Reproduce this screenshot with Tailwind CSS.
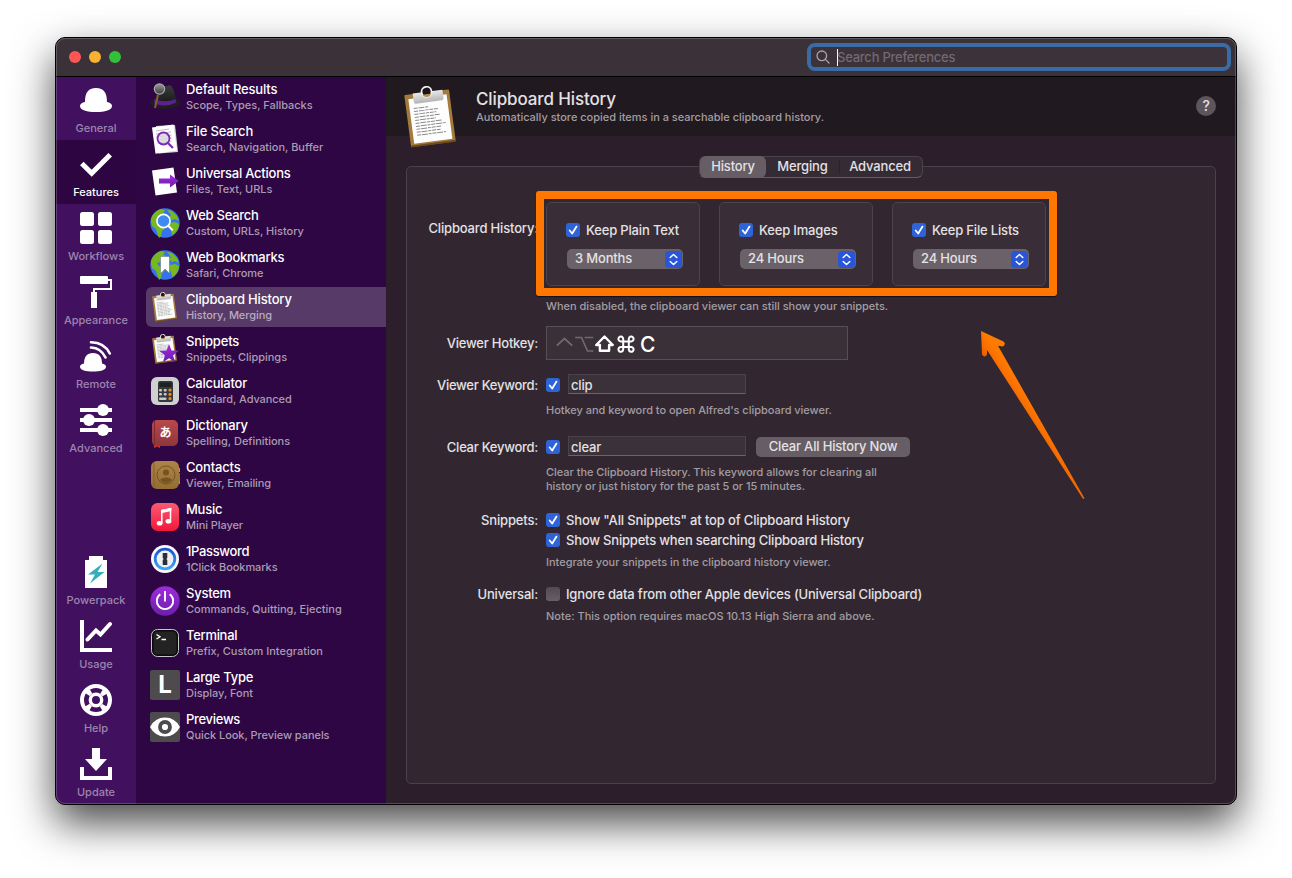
<!DOCTYPE html>
<html lang="en">
<head>
<meta charset="utf-8">
<title>Alfred Preferences</title>
<script src="https://cdn.jsdelivr.net/npm/@tailwindcss/browser@4"></script>
</head>
<body class="relative w-[1292px] h-[878px] overflow-hidden bg-white pt-[37px] pl-[55px] font-['Inter','Liberation_Sans',sans-serif] text-[13px] leading-4 font-[450] tracking-[-0.17px] text-[#e4e1e4]">

<!-- Shared drawings -->
<svg class="absolute left-0 top-0 size-0">
  <defs>
    <linearGradient id="violet" x1="0" y1="0" x2="0" y2="1"><stop offset="0" stop-color="#a02ae0"/><stop offset="1" stop-color="#6b1fa8"/></linearGradient>
    <linearGradient id="silver" x1="0" y1="0" x2="0" y2="1"><stop offset="0" stop-color="#e9e9e9"/><stop offset="1" stop-color="#b4b4b6"/></linearGradient>
    <linearGradient id="hat" x1="0" y1="0" x2="0" y2="1"><stop offset="0" stop-color="#3d3d3d"/><stop offset="1" stop-color="#151515"/></linearGradient>
    <linearGradient id="lens" x1="0" y1="0" x2="0" y2="1"><stop offset="0" stop-color="#9a9a9a"/><stop offset="1" stop-color="#3c3c3c"/></linearGradient>
    <linearGradient id="red" x1="0" y1="0" x2="0" y2="1"><stop offset="0" stop-color="#fb5b72"/><stop offset="1" stop-color="#f3173a"/></linearGradient>
    <linearGradient id="book" x1="0" y1="0" x2="0" y2="1"><stop offset="0" stop-color="#b9484c"/><stop offset="1" stop-color="#8f363c"/></linearGradient>
    <linearGradient id="tan" x1="0" y1="0" x2="0" y2="1"><stop offset="0" stop-color="#ad8446"/><stop offset="1" stop-color="#946d35"/></linearGradient>
    <linearGradient id="onep" x1="0" y1="0" x2="0" y2="1"><stop offset="0" stop-color="#1b56d0"/><stop offset="1" stop-color="#3aa5f8"/></linearGradient>
    <linearGradient id="arrow" gradientUnits="userSpaceOnUse" x1="1026" y1="420" x2="1038" y2="412"><stop offset="0" stop-color="#e85f00"/><stop offset=".5" stop-color="#f96e00"/><stop offset="1" stop-color="#ff7a00"/></linearGradient>
    <symbol id="clipboard" viewBox="0 0 52 62">
      <g transform="rotate(-7.5 26 32)">
        <rect x="3.5" y="6" width="45" height="52.5" rx="1" fill="#a47a3c"/>
        <rect x="3.5" y="57" width="45" height="1.8" fill="#6b4a1c"/>
        <rect x="7" y="10.500" width="38.500" height="45" fill="#fdfdfd"/>
        <path d="M12 5.500h30v8.500q0 2-2 2h-26q-2 0-2-2z" fill="url(#silver)"/>
        <circle cx="26" cy="5.500" r="5" fill="#1c1419" stroke="#f1f1f1" stroke-width="1.800"/>
        <path d="M21.500 8h9a5 5 0 0 1-9 0z" fill="#b58a4a"/>
        <path d="M11 20.500h15M11 23.500h24M11 26.500h22M11 29.500h25M11 32.500h21M11 35.500h27M11 38.500h30M11 41.500h25M11 44.500h24M11 47.500h29" stroke="#8a8a8a" stroke-width="1" stroke-dasharray="4 .8 6 .8 3 .8"/>
      </g>
    </symbol>
    <symbol id="globe" viewBox="0 0 30 30">
      <circle cx="15" cy="15" r="14.700" fill="#3574ee"/>
      <path d="M1 11C3 5 7 2 11 1l4 1-2 3 3 1-4 3-1 3-4 1 2 3 4 1 2 3-3 3-1 5-2 2q-2-5-3-9l-4-3-1-4zM17 2l5 1 5 5 2 5-4-2-3 1-3-3 2-2zM20 15l5-1 4 2q0 5-4 9l-3 2-1-5-2-3z" fill="#76b81d"/>
    </symbol>
    <symbol id="tick" viewBox="0 0 14 14">
      <rect width="14" height="14" rx="3" fill="#2e64d8"/>
      <path d="M3.700 7.500l2.500 3L10.500 3.600" fill="none" stroke="#fff" stroke-width="1.800" stroke-linecap="round" stroke-linejoin="round"/>
    </symbol>
    <symbol id="updown" viewBox="0 0 17 17">
      <rect width="17" height="17" rx="4" fill="#2955d6"/>
      <path d="M5.200 6.500l3.300-3 3.300 3M5.200 10.500l3.300 3 3.300-3" fill="none" stroke="#fff" stroke-width="1.500" stroke-linecap="round" stroke-linejoin="round"/>
    </symbol>
  </defs>
</svg>

<div class="relative w-[1182px] h-[768px] rounded-[10px] border border-black bg-[#2c1f2b] shadow-[0_18px_42px_rgba(0,0,0,0.72)]">
<div class="w-full h-full rounded-[9px] overflow-hidden flex flex-col">

  <!-- Title bar -->
  <header class="h-[39px] shrink-0 bg-[#3a3139] border-b border-b-black flex items-center justify-between pl-[13px] pr-[5px]">
    <div class="flex gap-2">
      <span class="size-3 rounded-full bg-[#fc5753]"></span>
      <span class="size-3 rounded-full bg-[#f7b32f]"></span>
      <span class="size-3 rounded-full bg-[#34c13a]"></span>
    </div>
    <div class="w-[424px] h-7 rounded-[8px] border-4 border-[#3a6ba5] bg-[#3b323a] flex items-center pl-[5px] tracking-[-0.24px] text-[#716a71]">
      <svg class="size-[14px] mr-[7px]" viewBox="0 0 14 14" fill="none" stroke="#a9a4a8" stroke-width="1.300" stroke-linecap="round"><circle cx="5.800" cy="5.800" r="4.800"/><path d="M9.400 9.400L13 13"/></svg>
      <span class="w-px h-[17px] bg-white"></span>
      <span class="-ml-px">Search Preferences</span>
    </div>
  </header>

  <div class="flex flex-1 min-h-0">

    <!-- Section bar -->
    <nav class="w-20 shrink-0 bg-[#41115f] flex flex-col text-[11px] leading-4 tracking-[0px] text-[#9d85ad]">
      <div class="h-[63px] pt-[7px] flex flex-col items-center gap-1">
        <svg class="size-8" viewBox="0 0 32 32" fill="#fff"><path d="M5 18C5 9 8 4 16 4s11 5 11 14c3 .5 5 2 5 4 0 4-7 6-16 6S0 26 0 22c0-2 2-3.500 5-4z"/></svg>
        <span>General</span>
      </div>
      <div class="h-16 pt-2 flex flex-col items-center gap-1 bg-[#2d0641] text-white font-medium">
        <svg class="size-8" viewBox="0 0 32 32" fill="none" stroke="#fff" stroke-width="5"><path d="M1.800 15.500L11.700 25.200 30.200 6.800"/></svg>
        <span>Features</span>
      </div>
      <div class="h-16 pt-2 flex flex-col items-center gap-1">
        <svg class="size-8" viewBox="0 0 32 32" fill="#fff"><rect width="14" height="14" rx="2.500"/><rect x="18" width="14" height="14" rx="2.500"/><rect y="18" width="14" height="14" rx="2.500"/><rect x="18" y="18" width="14" height="14" rx="2.500"/></svg>
        <span>Workflows</span>
      </div>
      <div class="h-16 pt-2 flex flex-col items-center gap-1">
        <svg class="size-8" viewBox="0 0 32 32"><rect width="28" height="8" rx="1" fill="#fff"/><rect x="11" y="16" width="6" height="16" fill="#fff"/><path d="M28 4h3v9H14v4" fill="none" stroke="#fff" stroke-width="2"/></svg>
        <span>Appearance</span>
      </div>
      <div class="h-16 pt-2 flex flex-col items-center gap-1">
        <svg class="size-8" viewBox="0 0 32 32" fill="#fff"><path d="M4 23.500C4 17 7 13 13 13s9 4 9 10.500c2.500.5 4 1.500 4 3.200C26 30 20 31.500 13 31.500S0 30 0 26.700c0-1.700 1.500-2.700 4-3.200z"/><path d="M11 7.500Q21 8 25.500 17.500M11 2.200Q24.500 2.500 29.800 13.500" fill="none" stroke="#fff" stroke-width="2.600" stroke-linecap="round"/></svg>
        <span>Remote</span>
      </div>
      <div class="h-16 pt-2 flex flex-col items-center gap-1">
        <svg class="size-8" viewBox="0 0 32 32" fill="#fff"><path d="M0 4h32v4H0zM0 14h32v4H0zM0 24h32v4H0z"/><circle cx="23" cy="6" r="6"/><circle cx="9" cy="16" r="6"/><circle cx="23" cy="26" r="6"/></svg>
        <span>Advanced</span>
      </div>
      <div class="flex-1"></div>
      <div class="h-16 pt-2 flex flex-col items-center gap-1">
        <svg class="size-8" viewBox="0 0 32 32"><path d="M5 4h4V0h14v4h4v28H5z" fill="#fff"/><path d="M22.500 7.500L8 18.500h7L10 27.500 24.500 16h-7z" fill="#34aebb"/></svg>
        <span>Powerpack</span>
      </div>
      <div class="h-16 pt-2 flex flex-col items-center gap-1">
        <svg class="size-8" viewBox="0 0 32 32" fill="none" stroke="#fff" stroke-width="4"><path d="M2 0v30h30"/><path d="M7.500 19.500l8.500-9 4.500 4L30 4" stroke-linecap="round"/></svg>
        <span>Usage</span>
      </div>
      <div class="h-16 pt-2 flex flex-col items-center gap-1">
        <svg class="size-8" viewBox="0 0 32 32" fill="none" stroke="#fff"><circle cx="16" cy="16" r="14" stroke-width="4"/><circle cx="16" cy="16" r="5.700" stroke-width="3.400"/><circle cx="16" cy="16" r="10" stroke-width="5" stroke-dasharray="4.600 11.108" stroke-dashoffset="-5.554"/></svg>
        <span>Help</span>
      </div>
      <div class="h-16 pt-2 flex flex-col items-center gap-1">
        <svg class="size-8" viewBox="0 0 32 32" fill="#fff"><path d="M12 0h8v11h7L16 23 5 11h7z"/><path d="M0 19h4v9h24v-9h4v13H0z"/></svg>
        <span>Update</span>
      </div>
    </nav>

    <!-- Feature list -->
    <aside class="w-[250px] shrink-0 bg-[#2d0643] pl-[10px] flex flex-col gap-[2px]">
      <div class="h-10 pl-1 flex items-center gap-[6px]">
        <svg class="size-[30px]" viewBox="0 0 30 30"><ellipse cx="15" cy="21" rx="15" ry="6" fill="#201d20"/><path d="M5 21C6 9 9 5 12 4q4 1 8-1 5 3 6 17-10 6-21 1z" fill="url(#hat)"/><path d="M4.500 17q11 4.500 21 0l.8 3.500q-11 5.500-22 1z" fill="#5c2191"/><path d="M8 13L5 26" stroke="#8c5b35" stroke-width="2"/><circle cx="9.500" cy="7" r="5.200" fill="url(#lens)" stroke="#a8a8a8" stroke-width="1.200"/></svg>
        <div><div class="font-medium text-white">Default Results</div><div class="text-[11px] tracking-[-0.03px] text-[#ab9bb3]">Scope, Types, Fallbacks</div></div>
      </div>
      <div class="h-10 pl-1 flex items-center gap-[6px]">
        <svg class="size-[30px]" viewBox="0 0 30 30"><path d="M6 2l19-1 3 27-19 1.500z" fill="#d6d6d6"/><path d="M2 3.500L23.500.5l3.500 26L5.500 29.800z" fill="#fff"/><path d="M6 7l13-2M6 10l15-2M6.500 13l15-2M7 16l15-2M7.500 19l14-2" stroke="#b7b7b7" stroke-width=".9"/><circle cx="13.500" cy="14.500" r="6" fill="#d9d4de" fill-opacity=".8" stroke="#7d2ab5" stroke-width="1.800"/><path d="M18 19l5 5" stroke="#7d2ab5" stroke-width="2.200"/></svg>
        <div><div class="font-medium text-white">File Search</div><div class="text-[11px] tracking-[-0.02px] text-[#ab9bb3]">Search, Navigation, Buffer</div></div>
      </div>
      <div class="h-10 pl-1 flex items-center gap-[6px]">
        <svg class="size-[30px]" viewBox="0 0 30 30"><path d="M2 4.500L23.500 1.500l3.500 25L5.500 29.500z" fill="#fff"/><path d="M9 12.500h11V8.500L28.800 15 20 21.500v-4H9z" fill="url(#violet)"/></svg>
        <div><div class="font-medium tracking-[-0.25px] text-white">Universal Actions</div><div class="text-[11px] tracking-[-0.02px] text-[#ab9bb3]">Files, Text, URLs</div></div>
      </div>
      <div class="h-10 pl-1 flex items-center gap-[6px]">
        <svg class="size-[30px]" viewBox="0 0 30 30"><use href="#globe"/><circle cx="13.500" cy="13" r="6.600" fill="#3f8bf3" stroke="#fff" stroke-width="1.600"/><path d="M18.200 17.800l4.600 4.600" stroke="#fff" stroke-width="2"/></svg>
        <div><div class="font-medium tracking-[-0.25px] text-white">Web Search</div><div class="text-[11px] tracking-[-0.02px] text-[#ab9bb3]">Custom, URLs, History</div></div>
      </div>
      <div class="h-10 pl-1 flex items-center gap-[6px]">
        <svg class="size-[30px]" viewBox="0 0 30 30"><use href="#globe"/><path d="M10.500 6.500h9v17L15 19l-4.500 4.500z" fill="#fff" stroke="#5b6b80" stroke-width=".5"/></svg>
        <div><div class="font-medium tracking-[-0.25px] text-white">Web Bookmarks</div><div class="text-[11px] tracking-[-0.08px] text-[#ab9bb3]">Safari, Chrome</div></div>
      </div>
      <div class="h-10 pl-1 flex items-center gap-[6px] rounded-l-[6px] bg-[#583a68]">
        <svg class="size-[30px]" viewBox="0 0 30 30"><use href="#clipboard" x="1" width="27" height="30"/></svg>
        <div><div class="font-medium text-white">Clipboard History</div><div class="text-[11px] tracking-[-0.08px] text-[#b9abc0]">History, Merging</div></div>
      </div>
      <div class="h-10 pl-1 flex items-center gap-[6px]">
        <svg class="size-[30px]" viewBox="0 0 30 30"><use href="#clipboard" x="1" width="27" height="30"/><path d="M19 10l2.500 6.500 7.300.3-5.700 4.500 2 7L19 24.300l-6.100 4 2-7-5.700-4.500 7.300-.3z" fill="url(#violet)"/></svg>
        <div><div class="font-medium text-white">Snippets</div><div class="text-[11px] tracking-[-0.03px] text-[#ab9bb3]">Snippets, Clippings</div></div>
      </div>
      <div class="h-10 pl-1 flex items-center gap-[6px]">
        <svg class="size-[30px]" viewBox="0 0 30 30"><rect x="1" y="1" width="28" height="28" rx="6" fill="#cfd0d2"/><rect x="8" y="5" width="15" height="21" rx="2" fill="#37383b"/><rect x="9.500" y="6.500" width="12" height="4.500" fill="#1f2022"/><g fill="#c9c9c9"><rect x="9" y="13" width="3" height="2.400" rx="1"/><rect x="13.700" y="13" width="3" height="2.400" rx="1"/><rect x="9" y="17" width="3" height="2.400" rx="1"/><rect x="13.700" y="17" width="3" height="2.400" rx="1"/><rect x="9" y="21.500" width="7.500" height="2.600" rx="1"/></g><g fill="#f28b1d"><rect x="18.500" y="12.700" width="3" height="2.800" rx="1"/><rect x="18.500" y="16.900" width="3" height="2.800" rx="1"/><rect x="18.500" y="21.300" width="3" height="2.800" rx="1"/></g></svg>
        <div><div class="font-medium tracking-[-0.24px] text-white">Calculator</div><div class="text-[11px] tracking-[-0.08px] text-[#ab9bb3]">Standard, Advanced</div></div>
      </div>
      <div class="h-10 pl-1 flex items-center gap-[6px]">
        <svg class="size-[30px]" viewBox="0 0 30 30"><path d="M4 26h6v4l-3-1.500L4 30z" fill="#d8302f"/><rect x="2" y="2" width="26" height="26" rx="5" fill="url(#book)"/><path d="M4.500 3v24" stroke="#7d2c33" stroke-width="1"/><text x="15.500" y="18.500" text-anchor="middle" font-family="Noto Sans CJK JP, sans-serif" font-weight="700" font-size="12" fill="#fff">あ</text></svg>
        <div><div class="font-medium text-white">Dictionary</div><div class="text-[11px] tracking-[-0.03px] text-[#ab9bb3]">Spelling, Definitions</div></div>
      </div>
      <div class="h-10 pl-1 flex items-center gap-[6px]">
        <svg class="size-[30px]" viewBox="0 0 30 30"><path d="M28 8h2v4h-2z" fill="#8a9aa8"/><path d="M28 13h2v4h-2z" fill="#3b82c4"/><path d="M28 17h2v4h-2z" fill="#4ca34c"/><path d="M28 21h2v3h-2z" fill="#d9822b"/><rect x="1" y="1" width="28" height="28" rx="6" fill="url(#tan)"/><path d="M4 2.500v25" stroke="#7e5b28" stroke-width=".8"/><circle cx="16" cy="15" r="9" fill="none" stroke="#6e4f20" stroke-width=".9"/><g fill="#73531f"><circle cx="16" cy="12.500" r="3"/><path d="M10 20q1.500-2.500 6-2.500t6 2.500q-2.500 3-6 3t-6-3z"/></g></svg>
        <div><div class="font-medium text-white">Contacts</div><div class="text-[11px] tracking-[-0.08px] text-[#ab9bb3]">Viewer, Emailing</div></div>
      </div>
      <div class="h-10 pl-1 flex items-center gap-[6px]">
        <svg class="size-[30px]" viewBox="0 0 30 30"><rect x="1" y="1" width="28" height="28" rx="6.500" fill="url(#red)"/><path d="M11.800 21V8.600L20.500 6.800V18.500" fill="none" stroke="#fff" stroke-width="1.500"/><path d="M11 8l10.300-2.200V9L11 11.200z" fill="#fff"/><ellipse cx="9.600" cy="21.300" rx="2.900" ry="2.300" fill="#fff"/><ellipse cx="18.500" cy="19.200" rx="2.900" ry="2.300" fill="#fff"/></svg>
        <div><div class="font-medium tracking-[-0.24px] text-white">Music</div><div class="text-[11px] tracking-[-0.08px] text-[#ab9bb3]">Mini Player</div></div>
      </div>
      <div class="h-10 pl-1 flex items-center gap-[6px]">
        <svg class="size-[30px]" viewBox="0 0 30 30"><circle cx="15" cy="15" r="14" fill="#fafafa"/><circle cx="15" cy="15" r="9.800" fill="#eef0f2" stroke="url(#onep)" stroke-width="2.800"/><path d="M12.700 9h4.600v5l-1 1 1 1v5h-4.600v-5l1-1-1-1z" fill="#2b2f36"/></svg>
        <div><div class="font-medium tracking-[-0.35px] text-white">1Password</div><div class="text-[11px] tracking-[-0.08px] text-[#ab9bb3]">1Click Bookmarks</div></div>
      </div>
      <div class="h-10 pl-1 flex items-center gap-[6px]">
        <svg class="size-[30px]" viewBox="0 0 30 30"><circle cx="15" cy="15" r="14.700" fill="url(#violet)"/><path d="M10.300 8.200a8.200 8.200 0 1 0 9.400 0M15 5v10.500" fill="none" stroke="#fff" stroke-width="1.900"/></svg>
        <div><div class="font-medium tracking-[-0.24px] text-white">System</div><div class="text-[11px] tracking-[0.01px] text-[#ab9bb3]">Commands, Quitting, Ejecting</div></div>
      </div>
      <div class="h-10 pl-1 flex items-center gap-[6px]">
        <svg class="size-[30px]" viewBox="0 0 30 30"><rect x="1.500" y="1.500" width="27" height="27" rx="6" fill="#0b0b0b" stroke="#c3c6cb" stroke-width="1"/><rect x="3.500" y="3.500" width="23" height="23" rx="4" fill="#232323"/><path d="M6.500 6.500L10 8.800 6.500 11M11.500 11.500h4.500" fill="none" stroke="#fff" stroke-width="1.300"/></svg>
        <div><div class="font-medium tracking-[-0.3px] text-white">Terminal</div><div class="text-[11px] tracking-[-0.01px] text-[#ab9bb3]">Prefix, Custom Integration</div></div>
      </div>
      <div class="h-10 pl-1 flex items-center gap-[6px]">
        <div class="size-[30px] rounded-[2px] bg-[#4d4b4e] flex items-center justify-center text-[24px] leading-none font-bold text-white">L</div>
        <div><div class="font-medium tracking-[-0.24px] text-white">Large Type</div><div class="text-[11px] tracking-[-0.03px] text-[#ab9bb3]">Display, Font</div></div>
      </div>
      <div class="h-10 pl-1 flex items-center gap-[6px]">
        <svg class="size-[30px]" viewBox="0 0 30 30"><rect width="30" height="30" rx="2" fill="#4d4b4e"/><path d="M0 15Q5 5.500 15 5.500T30 15Q25 24.500 15 24.500T0 15z" fill="#fff"/><circle cx="15" cy="15" r="5" fill="none" stroke="#4d4b4e" stroke-width="3.800"/></svg>
        <div><div class="font-medium tracking-[-0.3px] text-white">Previews</div><div class="text-[11px] tracking-[-0.05px] text-[#ab9bb3]">Quick Look, Preview panels</div></div>
      </div>
    </aside>

    <!-- Feature pane -->
    <main class="flex-1 min-w-0 flex flex-col">
      <div class="h-[59px] shrink-0 bg-[#211920] flex pl-[18px] pr-[20px]">
        <svg class="w-[52px] h-[62px] mt-[9px] shrink-0 overflow-visible"><use href="#clipboard" width="52" height="62"/></svg>
        <div class="ml-5 mt-[11px] flex-1">
          <div class="text-[17px] leading-[22px] tracking-[-0.12px]">Clipboard History</div>
          <div class="text-[11px] leading-[14px] tracking-[-0.01px] text-[#a39ea2]">Automatically store copied items in a searchable clipboard history.</div>
        </div>
        <div class="size-5 mt-[19px] rounded-full bg-[#5c555b] flex items-center justify-center text-[14px] font-medium">?</div>
      </div>

      <section class="relative mt-[30px] ml-5 w-[810px] h-[618px] rounded-[5px] border border-[#4b414a] bg-[#322731]">
        <div class="absolute left-[292px] -top-[11px] w-[224px] h-[22px] rounded-[6px] border border-[#4b424a] border-b-[#655c64] bg-[#352b34] flex items-stretch">
          <div class="w-[66px] -my-px rounded-[6px] bg-[#665d65] flex items-center justify-center pb-[2px]">History</div>
          <div class="w-[73px] flex items-center justify-center pb-[2px]">Merging</div>
          <div class="w-px my-[3px] bg-[#2b212a]"></div>
          <div class="flex-1 flex items-center justify-center pr-[2px] pb-[2px]">Advanced</div>
        </div>

        <div class="mt-[35px] flex gap-2">
          <div class="w-[131px] pt-[18px] text-right">Clipboard History:</div>
          <div class="relative flex gap-[19px]">
            <div class="w-[154px] h-[84px] rounded-[5px] border border-[#4b424a] bg-[#392e37] pt-5 pl-[19px]">
              <div class="flex items-center gap-[6px] h-[14px]"><svg class="size-[14px]"><use href="#tick"/></svg><span>Keep Plain Text</span></div>
              <div class="mt-3 ml-px w-[116px] h-5 rounded-[5px] bg-[#6a6169] flex items-center justify-between pl-2 pr-[1.5px]"><span class="-mt-[2px]">3 Months</span><svg class="size-[17px]"><use href="#updown"/></svg></div>
            </div>
            <div class="w-[154px] h-[84px] rounded-[5px] border border-[#4b424a] bg-[#392e37] pt-5 pl-[19px]">
              <div class="flex items-center gap-[6px] h-[14px]"><svg class="size-[14px]"><use href="#tick"/></svg><span>Keep Images</span></div>
              <div class="mt-3 ml-px w-[116px] h-5 rounded-[5px] bg-[#6a6169] flex items-center justify-between pl-2 pr-[1.5px]"><span class="-mt-[2px]">24 Hours</span><svg class="size-[17px]"><use href="#updown"/></svg></div>
            </div>
            <div class="w-[154px] h-[84px] rounded-[5px] border border-[#4b424a] bg-[#392e37] pt-5 pl-[19px]">
              <div class="flex items-center gap-[6px] h-[14px]"><svg class="size-[14px]"><use href="#tick"/></svg><span>Keep File Lists</span></div>
              <div class="mt-3 ml-px w-[116px] h-5 rounded-[5px] bg-[#6a6169] flex items-center justify-between pl-2 pr-[1.5px]"><span class="-mt-[2px]">24 Hours</span><svg class="size-[17px]"><use href="#updown"/></svg></div>
            </div>
            <div class="absolute -left-[10px] -top-[11px] w-[521px] h-[105px] rounded-[3px] border-8 border-[#ff7600] shadow-[0_1px_1px_rgba(0,0,0,0.6)]"></div>
          </div>
        </div>
        <p class="mt-[13px] ml-[139px] text-[11px] leading-[14px] tracking-[-0.02px] text-[#a29da1]">When disabled, the clipboard viewer can still show your snippets.</p>

        <div class="mt-[13px] flex gap-2 items-center">
          <div class="w-[131px] text-right tracking-[-0.22px]">Viewer Hotkey:</div>
          <div class="w-[302px] h-[34px] border border-[#574e56] bg-[#3a3038] pl-2 flex items-center">
            <svg class="w-[82px] h-6 mt-px" viewBox="0 0 82 24" fill="none" stroke-linecap="square"><path d="M2.500 13L9.500 6.500 16.500 13" stroke="#70686f" stroke-width="1.900"/><path d="M21 5.500h5.500L32.500 19h5M30.500 5.500h7" stroke="#70686f" stroke-width="1.700"/><path d="M49.500 4.500L57.800 13h-3.700v5.700h-9.200V13h-3.700z" stroke="#fff" stroke-width="2.400" stroke-linejoin="round"/><path d="M68.200 9.400h5.600v5.600h-5.600zM68.200 9.400v-2.200a2.400 2.400 0 1 0-2.400 2.200zM73.800 9.400v-2.200a2.400 2.400 0 1 1 2.400 2.200zM68.200 15v2.200a2.400 2.400 0 1 1-2.400-2.200zM73.800 15v2.200a2.400 2.400 0 1 0 2.400-2.200z" stroke="#fff" stroke-width="2"/></svg>
            <span class="ml-[3px] mt-[2px] text-[21px] leading-none font-medium text-white">C</span>
          </div>
        </div>

        <div class="mt-[14px] flex gap-2 items-center h-5">
          <div class="w-[131px] text-right pt-[2px] tracking-[-0.27px]">Viewer Keyword:</div>
          <svg class="size-[14px] mt-[2px]"><use href="#tick"/></svg>
          <div class="w-[178px] h-5 border border-[#4a4149] border-b-[#6b636a] bg-[#3b3139] pl-[2px] pt-[2px]">clip</div>
        </div>
        <p class="mt-[9px] ml-[139px] text-[11px] leading-[14px] tracking-[-0.03px] text-[#a29da1]">Hotkey and keyword to open Alfred's clipboard viewer.</p>

        <div class="mt-[19px] flex gap-2 items-center h-5">
          <div class="w-[131px] text-right pt-[2px] tracking-[-0.27px]">Clear Keyword:</div>
          <svg class="size-[14px] mt-[2px]"><use href="#tick"/></svg>
          <div class="w-[178px] h-5 border border-[#4a4149] border-b-[#6b636a] bg-[#3b3139] pl-[2px] pt-[2px]">clear</div>
          <div class="ml-[2px] mt-[2px] w-[154px] h-5 rounded-[5px] bg-[#665d65] flex items-center justify-center pb-[2px]">Clear All History Now</div>
        </div>
        <p class="mt-[9px] ml-[139px] text-[11px] leading-[14px] tracking-[-0.03px] text-[#a29da1]">Clear the Clipboard History. This keyword allows for clearing all<br>history or just history for the past 5 or 15 minutes.</p>

        <div class="mt-[19px] flex items-center h-4">
          <div class="w-[131px] text-right">Snippets:</div>
          <svg class="ml-2 mr-[6px] size-[14px]"><use href="#tick"/></svg>
          <span class="tracking-[-0.15px]">Show "All Snippets" at top of Clipboard History</span>
        </div>
        <div class="mt-1 ml-[139px] flex items-center gap-[6px] h-4">
          <svg class="size-[14px]"><use href="#tick"/></svg>
          <span class="tracking-[-0.2px]">Show Snippets when searching Clipboard History</span>
        </div>
        <p class="mt-[7px] ml-[139px] text-[11px] leading-[14px] tracking-[-0.02px] text-[#a29da1]">Integrate your snippets in the clipboard history viewer.</p>

        <div class="mt-[17px] flex items-center h-4">
          <div class="w-[131px] text-right">Universal:</div>
          <div class="ml-2 mr-[6px] size-[14px] rounded-[3px] bg-linear-to-b from-[#524951] to-[#675e66]"></div>
          <span>Ignore data from other Apple devices (Universal Clipboard)</span>
        </div>
        <p class="mt-[7px] ml-[139px] text-[11px] leading-[14px] tracking-[0.02px] text-[#a29da1]">Note: This option requires macOS 10.13 High Sierra and above.</p>

        <!-- Callout arrow -->
        <svg class="absolute left-[570px] top-[160px] w-[112px] h-[176px]" viewBox="977 327 112 176"><path d="M981 331L1003.500 341.500Q1006.500 344 1003 346.500L998 345.700 1084.300 498Q1084 499.500 1082.800 498.500L987 350V354.500Q984.500 358.500 982 354.500z" fill="url(#arrow)"/></svg>
      </section>
    </main>
  </div>
</div>
<div class="absolute inset-0 rounded-[9px] border border-white/20 pointer-events-none"></div>
</div>
</body>
</html>
